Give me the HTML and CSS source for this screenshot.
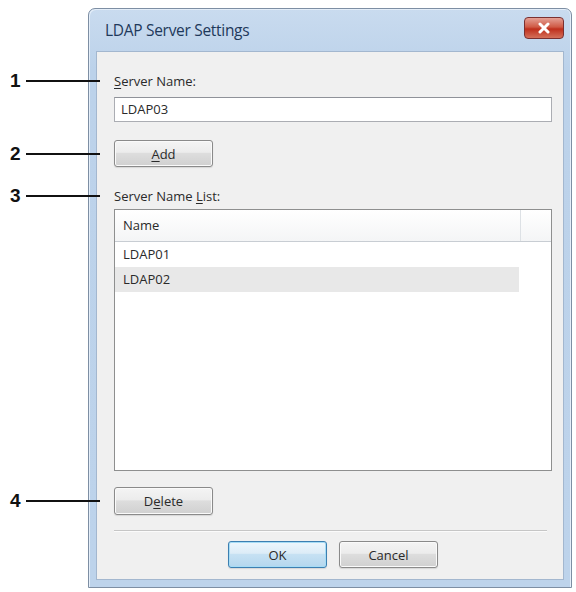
FILE: index.html
```html
<!DOCTYPE html>
<html>
<head>
<title>LDAP Server Settings</title>
<link rel="stylesheet" href="styles.css">
</head>
<body>
<div class="window">
  <div class="titlebar">
    <span class="title">LDAP Server Settings</span>
    <span class="close">
      <svg width="14" height="12" viewBox="0 0 14 12"><path d="M3 2 L11 10 M11 2 L3 10" stroke="#fff" stroke-width="3" stroke-linecap="round"/></svg>
    </span>
  </div>
  <div class="client">
    <div class="label callout" data-num="1"><u>S</u>erver Name:</div>
    <div class="textbox">LDAP03</div>
    <div class="row callout" data-num="2"><span class="btn"><u>A</u>dd</span></div>
    <div class="label list-label callout" data-num="3">Server Name <u>L</u>ist:</div>
    <div class="list">
      <div class="list-head">
        <span class="col-name">Name</span>
        <span class="col-rest"></span>
      </div>
      <div class="item">LDAP01</div>
      <div class="item selected">LDAP02</div>
    </div>
    <div class="row delete-row callout" data-num="4"><span class="btn">D<u>e</u>lete</span></div>
    <div class="separator"></div>
    <div class="actions">
      <span class="btn default">OK</span>
      <span class="btn">Cancel</span>
    </div>
  </div>
</div>
</body>
</html>
```

FILE: styles.css
```css
body{
	margin:0;
	background-color:#ffffff;
	font-family:"Open Sans", "DejaVu Sans", sans-serif;
	font-size:13px;
	color:#2a2a2a;
}
.window{
	margin:8px 0 0 88px;
	border:1px solid #7d8ea3;
	border-radius:7px 7px 0 0;
	background:linear-gradient(#c9dbef, #bcd2ea 60px, #bdd3eb);
	padding:0 7px 7px 7px;
	box-sizing:border-box;
	width:484px;
	height:580px;
	display:flex;
	flex-direction:column;
	box-shadow:inset 1px 1px 0 #e4eef9, inset -1px 0 0 #e4eef9;
}
.titlebar{
	height:42px;
	display:flex;
	align-items:center;
	justify-content:space-between;
	padding-left:9px;
}
.title{
	font-size:15.5px;
	color:#1e395b;
	letter-spacing:-0.3px;
}
.close{
	width:40px;
	height:22px;
	margin-top:-4px;
	border:1px solid #7a3030;
	border-radius:4px;
	background:linear-gradient(#e5a095, #cf5a45 45%, #bf2f1c 55%, #d4705a);
	display:flex;
	align-items:center;
	justify-content:center;
	box-sizing:border-box;
}
.client{
	flex:1;
	background-color:#f0f0f0;
	border:1px solid #a3b7cf;
	padding:0 11px 0 17px;
	display:flex;
	flex-direction:column;
	align-items:stretch;
}
.label{
	line-height:20px;
	height:20px;
	margin-top:19px;
}
.list-label{
	margin-top:19px;
}
u{
	text-decoration-thickness:1px;
	text-underline-offset:2px;
}
.callout{
	position:relative;
}
.callout::before{
	content:attr(data-num);
	position:absolute;
	left:-104px;
	top:50%;
	transform:translateY(-50%);
	font-family:"Liberation Sans", Arial, sans-serif;
	font-weight:bold;
	font-size:19px;
	color:#111;
	background-color:#fff;
}
.callout::after{
	content:"";
	position:absolute;
	left:-88px;
	width:74px;
	top:50%;
	height:2px;
	margin-top:-1px;
	background-color:#111;
}
.textbox{
	margin-top:6px;
	height:25px;
	border:1px solid #abadb3;
	border-top-color:#8f9299;
	background-color:#fff;
	padding-left:6px;
	line-height:23px;
	box-sizing:border-box;
}
.row{
	margin-top:18px;
	display:flex;
	height:27px;
}
.btn{
	display:inline-flex;
	align-items:center;
	justify-content:center;
	width:99px;
	height:27px;
	box-sizing:border-box;
	border:1px solid #8a8a8a;
	border-radius:3px;
	background:linear-gradient(#f4f4f4, #ececec 45%, #dddddd 50%, #d0d0d0);
	box-shadow:inset 0 0 0 1px #fafafa, 0 1px 1px #d6d6d6;
}
.btn.default{
	border-color:#3c7fb1;
	background:linear-gradient(#eef7fd, #dcecf7 45%, #c6e1f3 50%, #b4d7ee);
	box-shadow:inset 0 0 0 1px #a6dcf5, 0 1px 1px #d6d6d6;
}
.list{
	margin-top:3px;
	height:262px;
	border:1px solid #8e8f8f;
	background-color:#fff;
	box-sizing:border-box;
	display:flex;
	flex-direction:column;
}
.list-head{
	display:flex;
	height:31px;
	border-bottom:1px solid #c8cdd3;
	background:linear-gradient(#ffffff, #f4f5f6);
}
.col-name{
	flex:1;
	padding-left:8px;
	line-height:31px;
	border-right:1px solid #dde1e5;
}
.col-rest{
	width:30px;
}
.item{
	height:25px;
	line-height:25px;
	padding-left:8px;
	margin-right:32px;
}
.selected{
	background-color:#e8e8e8;
}
.delete-row{
	margin-top:16px;
	height:28px;
}
.delete-row .btn{
	height:28px;
}
.separator{
	margin-top:15px;
	margin-right:5px;
	height:1px;
	background-color:#c6c6c6;
	border-bottom:1px solid #fbfbfb;
}
.actions{
	margin-top:9px;
	display:flex;
	justify-content:center;
	gap:12px;
}
```
